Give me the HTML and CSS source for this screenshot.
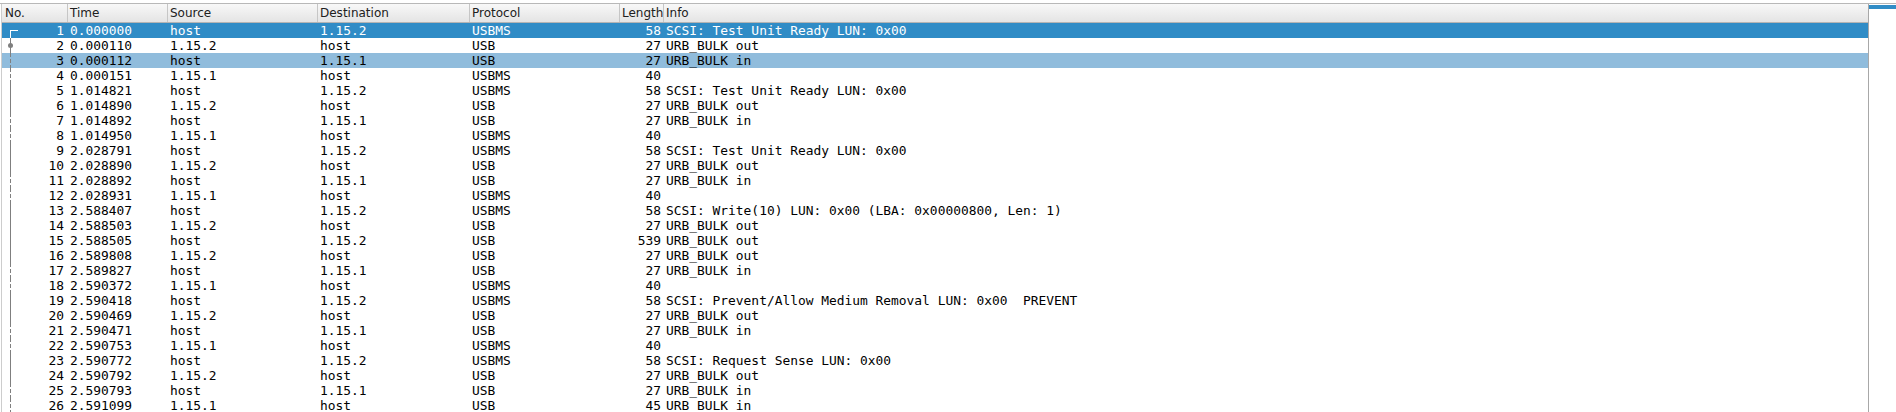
FILE: index.html
```html
<!DOCTYPE html>
<html>
<head>
<meta charset="utf-8">
<link rel="stylesheet" href="styles.css">
</head>
<body>
<div class="frame">
  <div class="list">
    <div class="head">
      <div class="hc">No.</div>
      <div class="hc">Time</div>
      <div class="hc">Source</div>
      <div class="hc">Destination</div>
      <div class="hc">Protocol</div>
      <div class="hc">Length</div>
      <div class="hc">Info</div>
    </div>
    <div class="rows">
      <div class="row sel"><div class="c no t-first">1</div><div class="c">0.000000</div><div class="c">host</div><div class="c">1.15.2</div><div class="c">USBMS</div><div class="c num">58</div><div class="c">SCSI: Test Unit Ready LUN: 0x00</div></div>
      <div class="row"><div class="c no t-solid t-dot">2</div><div class="c">0.000110</div><div class="c">1.15.2</div><div class="c">host</div><div class="c">USB</div><div class="c num">27</div><div class="c">URB_BULK out</div></div>
      <div class="row rel"><div class="c no t-dash">3</div><div class="c">0.000112</div><div class="c">host</div><div class="c">1.15.1</div><div class="c">USB</div><div class="c num">27</div><div class="c">URB_BULK in</div></div>
      <div class="row"><div class="c no t-dash">4</div><div class="c">0.000151</div><div class="c">1.15.1</div><div class="c">host</div><div class="c">USBMS</div><div class="c num">40</div><div class="c"></div></div>
      <div class="row"><div class="c no t-solid">5</div><div class="c">1.014821</div><div class="c">host</div><div class="c">1.15.2</div><div class="c">USBMS</div><div class="c num">58</div><div class="c">SCSI: Test Unit Ready LUN: 0x00</div></div>
      <div class="row"><div class="c no t-solid">6</div><div class="c">1.014890</div><div class="c">1.15.2</div><div class="c">host</div><div class="c">USB</div><div class="c num">27</div><div class="c">URB_BULK out</div></div>
      <div class="row"><div class="c no t-dash">7</div><div class="c">1.014892</div><div class="c">host</div><div class="c">1.15.1</div><div class="c">USB</div><div class="c num">27</div><div class="c">URB_BULK in</div></div>
      <div class="row"><div class="c no t-dash">8</div><div class="c">1.014950</div><div class="c">1.15.1</div><div class="c">host</div><div class="c">USBMS</div><div class="c num">40</div><div class="c"></div></div>
      <div class="row"><div class="c no t-solid">9</div><div class="c">2.028791</div><div class="c">host</div><div class="c">1.15.2</div><div class="c">USBMS</div><div class="c num">58</div><div class="c">SCSI: Test Unit Ready LUN: 0x00</div></div>
      <div class="row"><div class="c no t-solid">10</div><div class="c">2.028890</div><div class="c">1.15.2</div><div class="c">host</div><div class="c">USB</div><div class="c num">27</div><div class="c">URB_BULK out</div></div>
      <div class="row"><div class="c no t-dash">11</div><div class="c">2.028892</div><div class="c">host</div><div class="c">1.15.1</div><div class="c">USB</div><div class="c num">27</div><div class="c">URB_BULK in</div></div>
      <div class="row"><div class="c no t-dash">12</div><div class="c">2.028931</div><div class="c">1.15.1</div><div class="c">host</div><div class="c">USBMS</div><div class="c num">40</div><div class="c"></div></div>
      <div class="row"><div class="c no t-solid">13</div><div class="c">2.588407</div><div class="c">host</div><div class="c">1.15.2</div><div class="c">USBMS</div><div class="c num">58</div><div class="c">SCSI: Write(10) LUN: 0x00 (LBA: 0x00000800, Len: 1)</div></div>
      <div class="row"><div class="c no t-solid">14</div><div class="c">2.588503</div><div class="c">1.15.2</div><div class="c">host</div><div class="c">USB</div><div class="c num">27</div><div class="c">URB_BULK out</div></div>
      <div class="row"><div class="c no t-solid">15</div><div class="c">2.588505</div><div class="c">host</div><div class="c">1.15.2</div><div class="c">USB</div><div class="c num">539</div><div class="c">URB_BULK out</div></div>
      <div class="row"><div class="c no t-solid">16</div><div class="c">2.589808</div><div class="c">1.15.2</div><div class="c">host</div><div class="c">USB</div><div class="c num">27</div><div class="c">URB_BULK out</div></div>
      <div class="row"><div class="c no t-dash">17</div><div class="c">2.589827</div><div class="c">host</div><div class="c">1.15.1</div><div class="c">USB</div><div class="c num">27</div><div class="c">URB_BULK in</div></div>
      <div class="row"><div class="c no t-dash">18</div><div class="c">2.590372</div><div class="c">1.15.1</div><div class="c">host</div><div class="c">USBMS</div><div class="c num">40</div><div class="c"></div></div>
      <div class="row"><div class="c no t-solid">19</div><div class="c">2.590418</div><div class="c">host</div><div class="c">1.15.2</div><div class="c">USBMS</div><div class="c num">58</div><div class="c">SCSI: Prevent/Allow Medium Removal LUN: 0x00  PREVENT</div></div>
      <div class="row"><div class="c no t-solid">20</div><div class="c">2.590469</div><div class="c">1.15.2</div><div class="c">host</div><div class="c">USB</div><div class="c num">27</div><div class="c">URB_BULK out</div></div>
      <div class="row"><div class="c no t-dash">21</div><div class="c">2.590471</div><div class="c">host</div><div class="c">1.15.1</div><div class="c">USB</div><div class="c num">27</div><div class="c">URB_BULK in</div></div>
      <div class="row"><div class="c no t-dash">22</div><div class="c">2.590753</div><div class="c">1.15.1</div><div class="c">host</div><div class="c">USBMS</div><div class="c num">40</div><div class="c"></div></div>
      <div class="row"><div class="c no t-solid">23</div><div class="c">2.590772</div><div class="c">host</div><div class="c">1.15.2</div><div class="c">USBMS</div><div class="c num">58</div><div class="c">SCSI: Request Sense LUN: 0x00</div></div>
      <div class="row"><div class="c no t-solid">24</div><div class="c">2.590792</div><div class="c">1.15.2</div><div class="c">host</div><div class="c">USB</div><div class="c num">27</div><div class="c">URB_BULK out</div></div>
      <div class="row"><div class="c no t-dash">25</div><div class="c">2.590793</div><div class="c">host</div><div class="c">1.15.1</div><div class="c">USB</div><div class="c num">27</div><div class="c">URB_BULK in</div></div>
      <div class="row"><div class="c no t-dash">26</div><div class="c">2.591099</div><div class="c">1.15.1</div><div class="c">host</div><div class="c">USB</div><div class="c num">45</div><div class="c">URB_BULK in</div></div>
    </div>
  </div>
  <div class="minimap"><div class="mark"></div></div>
</div>
</body>
</html>
```
FILE: styles.css
```css
html, body {
  margin: 0;
  padding: 0;
  background: #ffffff;
  overflow: hidden;
}
body {
  width: 1896px;
  height: 412px;
  font-family: "DejaVu Sans", sans-serif;
}
.frame {
  margin-top: 3px;
  height: 409px;
  box-sizing: border-box;
  border-top: 1px solid #b8b8b8;
  display: flex;
  overflow: hidden;
}
.list {
  margin-left: 1px;
  width: 1868px;
  box-sizing: border-box;
  border-left: 1px solid #cdcdcd;
  border-right: 1px solid #a8a8a8;
  display: flex;
  flex-direction: column;
  overflow: hidden;
}
.head, .row {
  display: grid;
  grid-template-columns: 65px 100px 150px 152px 150px 44px 1fr;
}
.head {
  height: 19px;
  box-sizing: border-box;
  border-bottom: 1px solid #b4b4b4;
  background: linear-gradient(#f8f8f8, #e4e4e4);
  font-size: 12px;
  line-height: 18px;
  color: #202020;
}
.hc {
  padding-left: 2px;
  overflow: hidden;
  white-space: nowrap;
}
.hc + .hc {
  border-left: 1px solid #c6c6c6;
}
.hc:first-child {
  padding-left: 3px;
}
.row {
  height: 15px;
  font-family: "DejaVu Sans Mono", monospace;
  font-size: 12.9px;
  line-height: 15px;
  color: #000000;
}
.row.sel {
  background: #308cc6;
  color: #ffffff;
}
.row.rel {
  background: #90bcdc;
}
.c {
  padding-left: 3px;
  white-space: pre;
  overflow: hidden;
}
.c.num, .c.no {
  text-align: right;
  padding-left: 0;
  padding-right: 3px;
}
.c.num {
  padding-right: 2px;
}
.c.no {
  position: relative;
}
.c.no::before, .c.no::after {
  content: "";
  position: absolute;
}
.t-solid::before {
  left: 8px;
  top: 0;
  width: 1px;
  height: 15px;
  background: #7f7f7f;
}
.t-dash::before {
  left: 8px;
  top: 0;
  width: 1px;
  height: 15px;
  background: repeating-linear-gradient(#7f7f7f 0 4px, transparent 4px 6px);
}
.t-first::before {
  left: 8px;
  top: 7px;
  width: 1px;
  height: 8px;
  background: #ffffff;
}
.t-first::after {
  left: 8px;
  top: 7px;
  width: 8px;
  height: 1px;
  background: #ffffff;
}
.t-dot::after {
  left: 6px;
  top: 5px;
  width: 5px;
  height: 5px;
  border-radius: 50%;
  background: #7f7f7f;
}
.minimap {
  flex: 1;
  background: #ffffff;
}
.mark {
  margin-top: 1px;
  height: 4px;
  background: #308cc6;
}
```
